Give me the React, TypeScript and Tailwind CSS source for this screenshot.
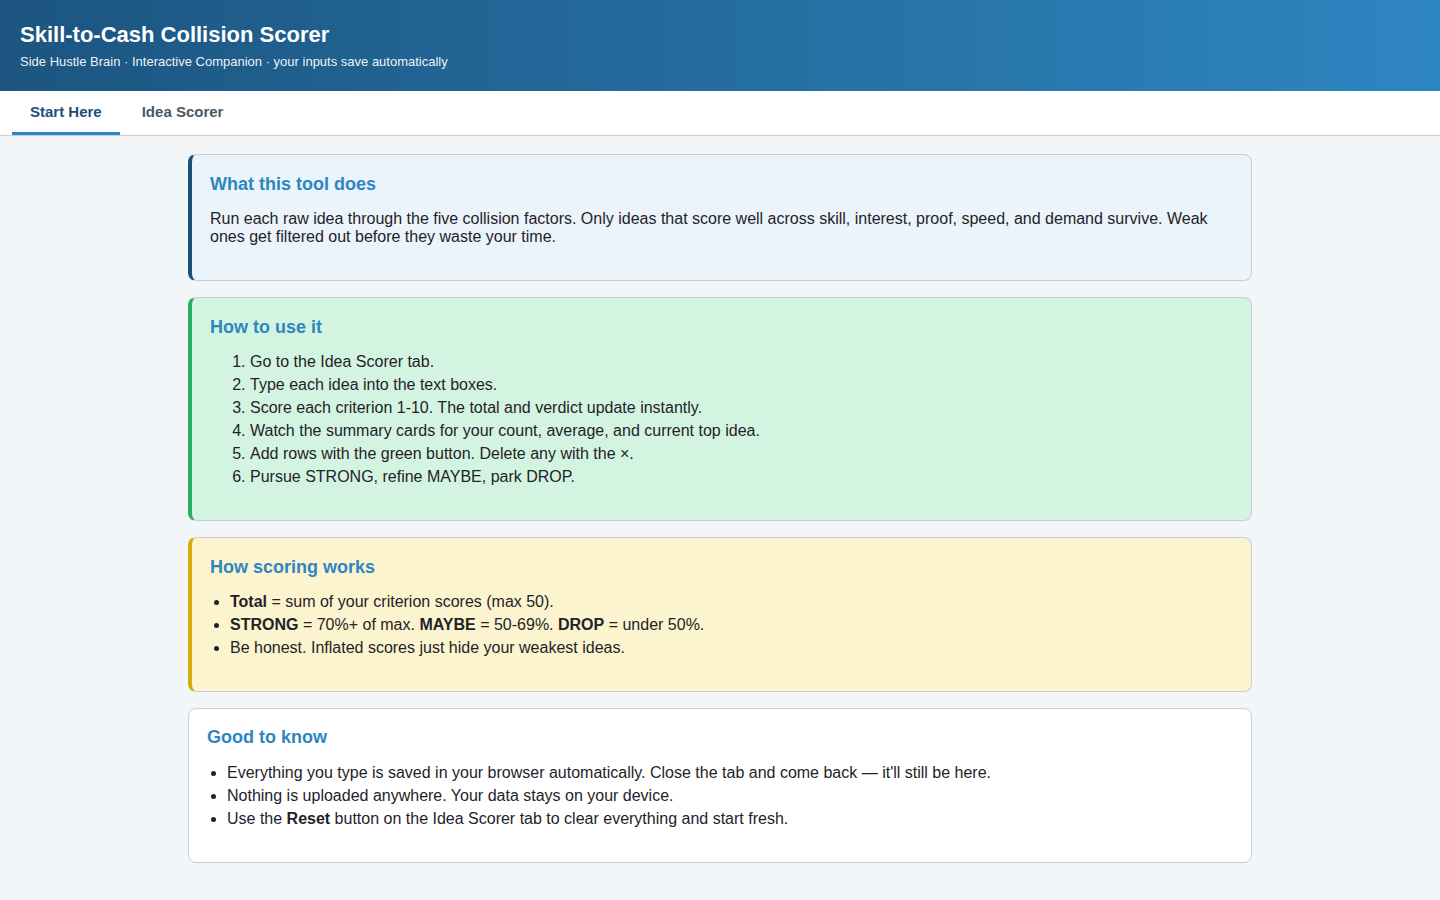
import React, { useState } from "react";

const font = { fontFamily: '"Liberation Sans", Arial, Helvetica, sans-serif' };

type CardProps = {
  title: string;
  tone: "blue" | "green" | "yellow" | "plain";
  children: React.ReactNode;
};

const toneClasses: Record<CardProps["tone"], string> = {
  blue: "bg-[#ebf3fb] border-l-4 border-l-[#1a5276] pt-[18px]",
  green: "bg-[#d4f4e2] border-l-4 border-l-[#27ae60] pt-[18px]",
  yellow: "bg-[#fcf3cf] border-l-4 border-l-[#d4ac0d] pt-[18px]",
  plain: "bg-white pt-[17px]",
};

const Card = ({ title, tone, children }: CardProps) => (
  <section
    className={`rounded-lg border border-[#c9ced4] px-[18px] pb-[18px] ${toneClasses[tone]}`}
  >
    <h3
      className={`text-[18px] leading-[22px] font-bold text-[#2e86c1] ${
        tone === "plain" ? "mb-[16px]" : "mb-[15px]"
      }`}
    >
      {title}
    </h3>
    {children}
  </section>
);

const App = () => {
  const [tab, setTab] = useState<"start" | "scorer">("start");

  return (
    <div className="min-h-screen bg-[#f3f6f9] text-[#1f2328]" style={font}>
      <header className="bg-gradient-to-r from-[#1c5580] to-[#2e86c1] px-5 pt-[22px] pb-[21px] text-white">
        <h1 className="text-[22px] leading-[26px] font-bold">
          Skill-to-Cash Collision Scorer
        </h1>
        <p className="mt-[6px] text-[13px] leading-[16px] text-white/95">
          Side Hustle Brain · Interactive Companion · your inputs save automatically
        </p>
      </header>

      <nav className="flex bg-white border-b border-[#c9ced4] pl-3">
        <button
          onClick={() => setTab("start")}
          className={`px-[18px] h-[44px] pt-[2px] text-[15px] font-bold border-b-[3px] ${
            tab === "start"
              ? "text-[#1f4e79] border-[#2e86c1]"
              : "text-[#4a5866] border-transparent"
          }`}
        >
          Start Here
        </button>
        <button
          onClick={() => setTab("scorer")}
          className={`px-[22px] h-[44px] pt-[2px] text-[15px] font-bold border-b-[3px] ${
            tab === "scorer"
              ? "text-[#1f4e79] border-[#2e86c1]"
              : "text-[#4a5866] border-transparent"
          }`}
        >
          Idea Scorer
        </button>
      </nav>

      <main className="max-w-[1064px] mx-auto pt-[18px] pb-10 flex flex-col gap-4 text-[16px]">
        <Card title="What this tool does" tone="blue">
          <p className="leading-[18px] mb-4">
            Run each raw idea through the five collision factors. Only ideas that
            score well across skill, interest, proof, speed, and demand survive.
            Weak ones get filtered out before they waste your time.
          </p>
        </Card>

        <Card title="How to use it" tone="green">
          <ol className="list-decimal pl-10 mb-4 flex flex-col gap-[5px] leading-[18px]">
            <li>Go to the Idea Scorer tab.</li>
            <li>Type each idea into the text boxes.</li>
            <li>Score each criterion 1-10. The total and verdict update instantly.</li>
            <li>Watch the summary cards for your count, average, and current top idea.</li>
            <li>Add rows with the green button. Delete any with the ×.</li>
            <li>Pursue STRONG, refine MAYBE, park DROP.</li>
          </ol>
        </Card>

        <Card title="How scoring works" tone="yellow">
          <ul className="list-disc pl-5 mb-4 flex flex-col gap-[5px] leading-[18px]">
            <li>
              <b>Total</b> = sum of your criterion scores (max 50).
            </li>
            <li>
              <b>STRONG</b> = 70%+ of max. <b>MAYBE</b> = 50-69%. <b>DROP</b> = under 50%.
            </li>
            <li>Be honest. Inflated scores just hide your weakest ideas.</li>
          </ul>
        </Card>

        <Card title="Good to know" tone="plain">
          <ul className="list-disc pl-5 mb-4 flex flex-col gap-[5px] leading-[18px]">
            <li>
              Everything you type is saved in your browser automatically. Close the
              tab and come back — it'll still be here.
            </li>
            <li>Nothing is uploaded anywhere. Your data stays on your device.</li>
            <li>
              Use the <b>Reset</b> button on the Idea Scorer tab to clear everything
              and start fresh.
            </li>
          </ul>
        </Card>
      </main>
    </div>
  );
};

export default App;
